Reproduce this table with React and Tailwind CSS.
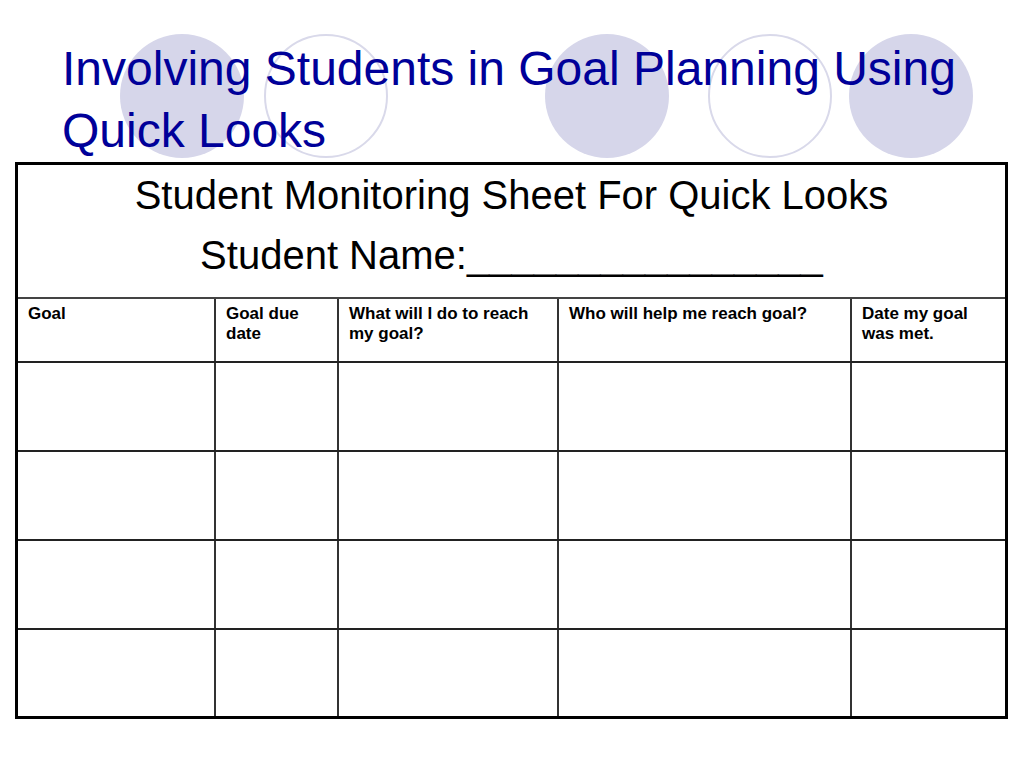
const COLS = [
  { w: "w-[198px]", label: "Goal" },
  { w: "w-[123px]", label: "Goal due date" },
  { w: "w-[220px]", label: "What will I do to reach my goal?" },
  { w: "w-[293px]", label: "Who will help me reach goal?" },
  { w: "w-[153px]", label: "Date my goal was met." },
];

const CIRCLES = [
  { left: "left-[120px]", filled: true },
  { left: "left-[264px]", filled: false },
  { left: "left-[545px]", filled: true },
  { left: "left-[708px]", filled: false },
  { left: "left-[849px]", filled: true },
];

function Cell({ w, last, children }) {
  return (
    <div className={`${w} shrink-0 h-full ${last ? "" : "border-r-2 border-[#333]"}`}>
      {children}
    </div>
  );
}

export default function App() {
  return (
    <div className="relative w-[1024px] h-[768px] bg-white overflow-hidden font-['Liberation_Sans',Arial,sans-serif]">
      {/* decorative circles behind the title */}
      {CIRCLES.map((c, i) => (
        <div
          key={i}
          className={`absolute top-[34px] ${c.left} w-[124px] h-[124px] rounded-full ${
            c.filled ? "bg-[#d6d6ea]" : "border-2 border-[#d9d9ea]"
          }`}
        />
      ))}

      <div className="relative">
        <h1 className="pt-[38px] pl-[62px] text-[48px] leading-[62px] text-[#000099] font-normal">
          Involving Students in Goal Planning Using
          <br />
          Quick Looks
        </h1>

        <div className="ml-[15px] w-[993px] border-[3px] border-black bg-white">
          <div className="h-[134px] border-b-2 border-[#444] text-center text-black text-[40px] leading-[60px]">
            <p>Student Monitoring Sheet For Quick Looks</p>
            <p>Student Name:________________</p>
          </div>

          <div className="flex h-[64px] border-b-2 border-[#222]">
            {COLS.map((c, i) => (
              <Cell key={i} w={c.w} last={i === COLS.length - 1}>
                <div className="pl-[10px] pr-2 pt-[5px] text-[17px] leading-[20px] font-bold text-black">
                  {c.label}
                </div>
              </Cell>
            ))}
          </div>

          {[0, 1, 2, 3].map((r) => (
            <div
              key={r}
              className={`flex ${r < 3 ? "h-[89px] border-b-2 border-[#222]" : "h-[86px]"}`}
            >
              {COLS.map((c, i) => (
                <Cell key={i} w={c.w} last={i === COLS.length - 1} />
              ))}
            </div>
          ))}
        </div>
      </div>
    </div>
  );
}
